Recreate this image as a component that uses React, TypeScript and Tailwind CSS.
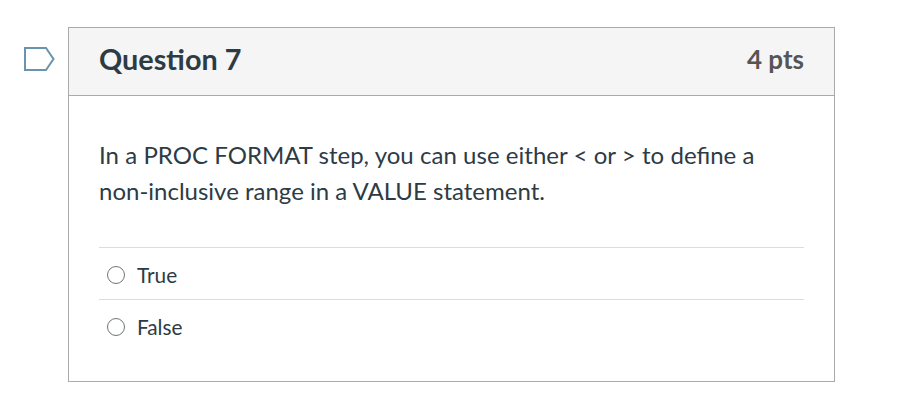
import React from 'react'

function Answer({ label }: { label: string }) {
  return (
    <div className="flex items-center h-[52px] border-t border-[#dcdcdc] pl-[8px] pt-[2px]">
      <span className="w-[18px] h-[18px] rounded-full border-[1.5px] border-[#6f7578] bg-white" />
      <span className="ml-[12px] text-[20.8px] text-[#2d3b45]">{label}</span>
    </div>
  )
}

export default function App() {
  return (
    <div className="w-[904px] h-[405px] bg-white flex items-start pt-[27px] pl-[24px] font-['Lato',sans-serif]">
      {/* bookmark flag */}
      <div className="w-[44px] pt-[20px]">
        <svg width="31" height="24" viewBox="0 0 31 24" fill="none">
          <path d="M1 1H22L29.5 12L22 23H1Z" stroke="#6a93ad" strokeWidth="2" />
        </svg>
      </div>
      {/* question card */}
      <div className="w-[767px] h-[355px] border border-[#aaaaaa]">
        <div className="h-[68px] bg-[#f5f5f5] border-b border-[#aaaaaa] flex items-center justify-between px-[30px] pb-[4px]">
          <span className="text-[28.8px] font-bold text-[#2d3b45]">Question 7</span>
          <span className="text-[26px] font-bold text-[#555555]">4 pts</span>
        </div>
        <div className="px-[30px] pt-[41px]">
          <p className="text-[24px] leading-[36px] text-[#2d3b45]">
            <span className="[word-spacing:0.15px]">In a PROC FORMAT step, you can use either &lt; or &gt; to define a</span>
            <br />
            non-inclusive range in a VALUE statement.
          </p>
          <div className="mt-[38px]">
            <Answer label="True" />
            <Answer label="False" />
          </div>
        </div>
      </div>
    </div>
  )
}
